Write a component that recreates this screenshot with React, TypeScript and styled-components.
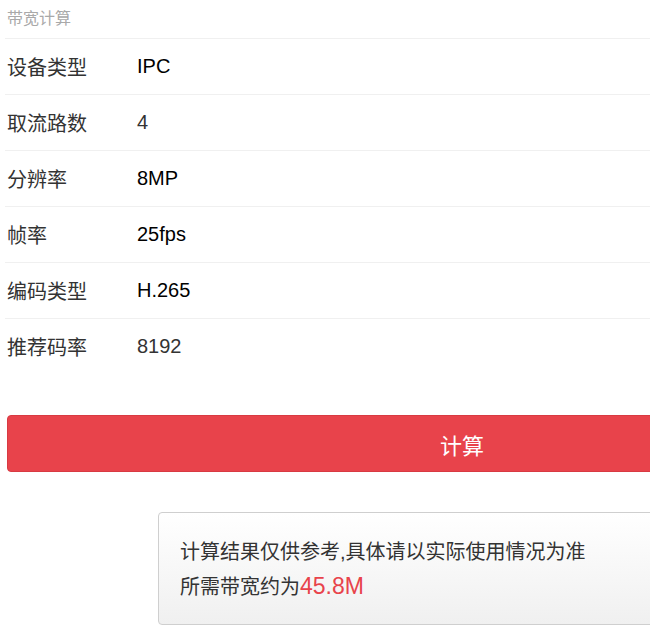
import React from "react";
import styled, { createGlobalStyle } from "styled-components";

const Global = createGlobalStyle`
  html, body { margin: 0; padding: 0; background: #fff; overflow: hidden; }
  body { font-family: "Liberation Sans", Arial, "Noto Sans CJK SC", sans-serif; }
`;

const Page = styled.div`
  width: 924px;
  padding: 0 0 0 5px;
  box-sizing: border-box;
`;

const Title = styled.div`
  height: 39px;
  line-height: 37px;
  font-size: 16px;
  color: #a9a9a9;
  padding-left: 2px;
  border-bottom: 1px solid #f0f0f0;
  box-sizing: border-box;
`;

const Row = styled.div<{ $last?: boolean }>`
  display: flex;
  align-items: center;
  height: 56px;
  border-bottom: 1px solid ${(p) => (p.$last ? "transparent" : "#f0f0f0")};
  box-sizing: border-box;
  font-size: 20px;
`;

const Label = styled.div`
  width: 130px;
  padding-left: 2px;
  color: #333;
`;

const Value = styled.div<{ $input?: boolean }>`
  color: ${(p) => (p.$input ? "#333" : "#000")};
`;

const Button = styled.button`
  display: block;
  width: 910px;
  height: 57px;
  margin: 40px 0 0 2px;
  background: #e8434b;
  border: 1px solid #d83a42;
  border-radius: 4px;
  color: #fff;
  font-size: 22px;
  font-family: "Liberation Sans", Arial, "Noto Sans CJK SC", sans-serif;
  padding: 0;
`;

const Result = styled.div`
  margin: 40px 0 0 153px;
  width: 600px;
  height: 113px;
  box-sizing: border-box;
  border: 1px solid #cfcfcf;
  border-radius: 4px;
  background: linear-gradient(to bottom, #ffffff, #f0f0f0);
  padding: 22px 0 0 21px;
  color: #333;
  font-size: 20px;
  line-height: 34px;
`;

const Highlight = styled.span`
  color: #e8434b;
  font-size: 23px;
`;

const rows: { label: string; value: string; input?: boolean }[] = [
  { label: "设备类型", value: "IPC" },
  { label: "取流路数", value: "4", input: true },
  { label: "分辨率", value: "8MP" },
  { label: "帧率", value: "25fps" },
  { label: "编码类型", value: "H.265" },
  { label: "推荐码率", value: "8192", input: true },
];

export default function App() {
  return (
    <>
      <Global />
      <Page>
        <Title>带宽计算</Title>
        {rows.map((r, i) => (
          <Row key={r.label} $last={i === rows.length - 1}>
            <Label>{r.label}</Label>
            <Value $input={r.input}>{r.value}</Value>
          </Row>
        ))}
        <Button>计算</Button>
        <Result>
          <div>计算结果仅供参考,具体请以实际使用情况为准</div>
          <div>
            所需带宽约为<Highlight>45.8M</Highlight>
          </div>
        </Result>
      </Page>
    </>
  );
}
